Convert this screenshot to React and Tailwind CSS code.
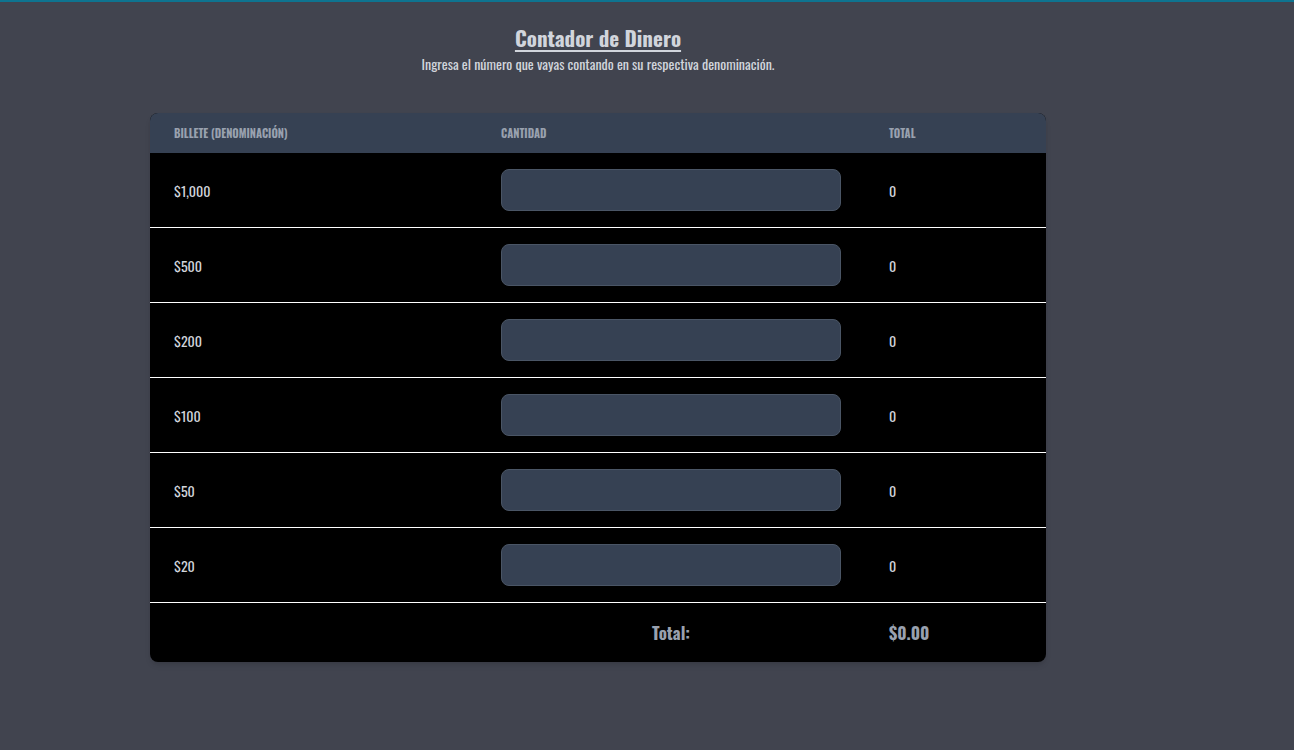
import React, { useState } from 'react';

const denominations = [1000, 500, 200, 100, 50, 20];

export default function App() {
  const [counts, setCounts] = useState({});

  const total = denominations.reduce((sum, d) => sum + d * (parseInt(counts[d]) || 0), 0);

  return (
    <div
      className="min-h-screen w-full bg-[#41444f] border-t-2 border-[#0e7490] text-gray-300"
      style={{ fontFamily: '"Oswald", "DejaVu Sans Condensed", "Liberation Sans Narrow", sans-serif' }}
    >
      <div className="w-[896px] ml-[150px] pt-[22px]">
        <div className="text-center">
          <h1 className="text-[21px] leading-[28px] font-bold underline decoration-2 underline-offset-[3px] text-gray-300">Contador de Dinero</h1>
          <p className="mt-[2px] text-[14px] leading-[20px] text-gray-300">Ingresa el número que vayas contando en su respectiva denominación.</p>
        </div>

        <div className="mt-[39px] rounded-lg overflow-hidden shadow-md bg-black">
          <table className="w-full border-collapse text-left">
            <thead className="bg-gray-700">
              <tr className="h-[40px] text-[11px] uppercase text-gray-400 font-bold">
                <th className="w-[327px] px-6 font-bold">Billete (Denominación)</th>
                <th className="w-[388px] px-6 font-bold">Cantidad</th>
                <th className="px-6 font-bold">Total</th>
              </tr>
            </thead>
            <tbody>
              {denominations.map((d) => (
                <tr key={d} className="border-b border-white">
                  <td className="px-6 py-4 text-[14px] text-gray-300">${d.toLocaleString('en-US')}</td>
                  <td className="px-6 py-4">
                    <input
                      type="number"
                      value={counts[d] || ''}
                      onChange={(e) => setCounts({ ...counts, [d]: e.target.value })}
                      className="w-full h-[42px] rounded-lg bg-gray-700 border border-gray-600 px-3 text-gray-200 outline-none"
                    />
                  </td>
                  <td className="px-6 py-4 text-[14px] text-gray-300">{d * (parseInt(counts[d]) || 0)}</td>
                </tr>
              ))}
              <tr className="h-[59px]">
                <td></td>
                <td className="px-6 text-center text-[17px] font-bold text-gray-400">Total:</td>
                <td className="px-6 text-[17px] font-bold text-gray-400">${total.toFixed(2)}</td>
              </tr>
            </tbody>
          </table>
        </div>
      </div>
    </div>
  );
}
